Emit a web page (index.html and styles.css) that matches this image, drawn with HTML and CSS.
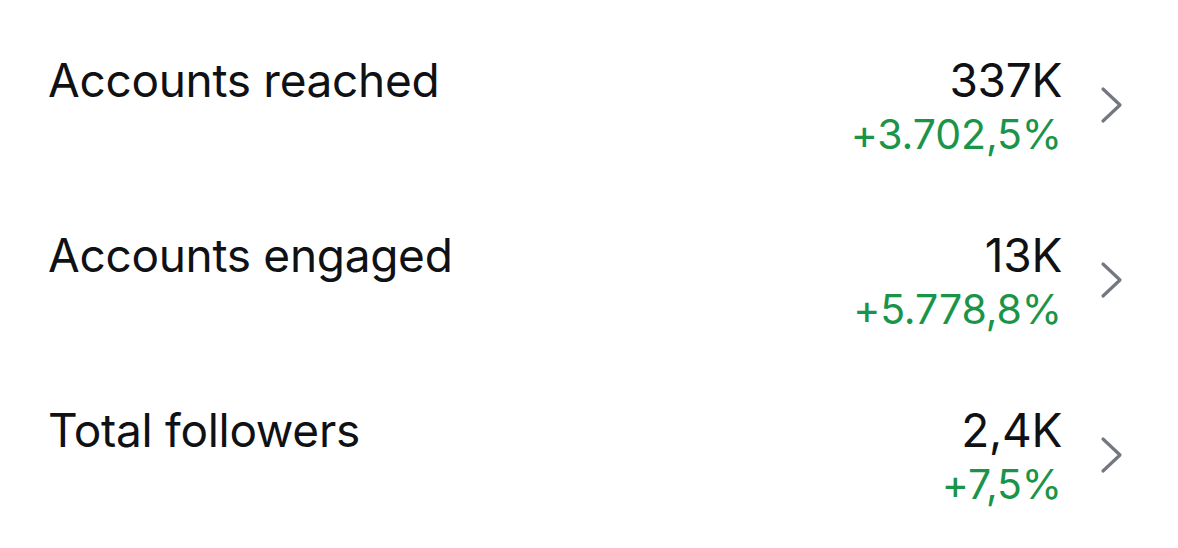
FILE: index.html
```html
<!DOCTYPE html>
<html>
<head>
<meta charset="utf-8">
<link rel="stylesheet" href="styles.css">
</head>
<body>
<div class="list">
  <div class="row">
    <div class="label">Accounts reached</div>
    <div class="values">
      <div class="value">337K</div>
      <div class="delta">+3.702,5%</div>
    </div>
    <svg class="chev" width="24" height="38" viewBox="0 0 24 38"><path d="M3 3 L20 19 L3 35" fill="none" stroke="#737780" stroke-width="3.2" stroke-linecap="round" stroke-linejoin="round"/></svg>
  </div>
  <div class="row">
    <div class="label">Accounts engaged</div>
    <div class="values">
      <div class="value">13K</div>
      <div class="delta">+5.778,8%</div>
    </div>
    <svg class="chev" width="24" height="38" viewBox="0 0 24 38"><path d="M3 3 L20 19 L3 35" fill="none" stroke="#737780" stroke-width="3.2" stroke-linecap="round" stroke-linejoin="round"/></svg>
  </div>
  <div class="row">
    <div class="label">Total followers</div>
    <div class="values">
      <div class="value">2,4K</div>
      <div class="delta">+7,5%</div>
    </div>
    <svg class="chev" width="24" height="38" viewBox="0 0 24 38"><path d="M3 3 L20 19 L3 35" fill="none" stroke="#737780" stroke-width="3.2" stroke-linecap="round" stroke-linejoin="round"/></svg>
  </div>
</div>
</body>
</html>
```
FILE: styles.css
```css
html, body {
  margin: 0;
  padding: 0;
  background: #ffffff;
}
body {
  font-family: Inter, "Noto Sans", sans-serif;
  color: #101114;
}
.list {
  display: flex;
  flex-direction: column;
  gap: 69px;
  padding: 52px 0 0 48px;
}
.row {
  display: flex;
  align-items: flex-start;
}
.label {
  flex: 1;
  font-size: 46px;
  line-height: 56px;
  letter-spacing: -0.3px;
}
.values {
  display: flex;
  flex-direction: column;
  align-items: flex-end;
}
.value {
  font-size: 46px;
  line-height: 56px;
  letter-spacing: -0.3px;
}
.delta {
  font-size: 41px;
  line-height: 48px;
  margin-top: 2px;
  color: #1a9448;
  letter-spacing: -0.1px;
}
.chev {
  margin: 34px 54px 0 38px;
}
```
